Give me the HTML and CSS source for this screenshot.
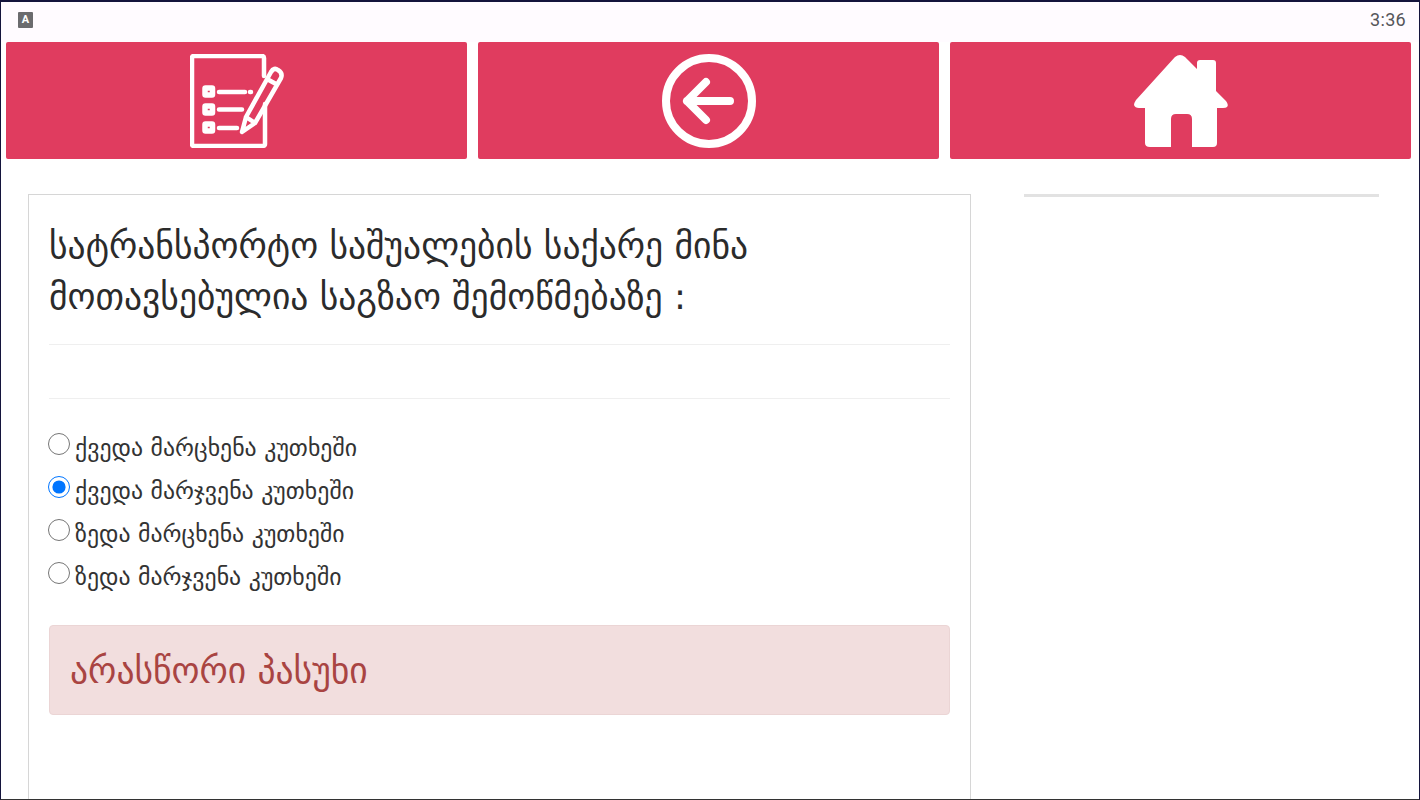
FILE: index.html
```html
<!DOCTYPE html>
<html lang="ka">
<head>
    <meta charset="UTF-8">
    <meta name="viewport" content="width=device-width, initial-scale=1.0">
    <title>საგზაო ნიშნები</title>
    <link rel="stylesheet" href="styles.css">
</head>
<body>
    <div class="status-bar">
        <span class="status-badge">A</span>
        <span class="status-time">3:36</span>
    </div>

    <nav class="nav-row">
        <a class="nav-button">
            <svg class="nav-icon" viewBox="0 0 94 94" width="94" height="94" fill="none" stroke="#fff" stroke-width="4.500" stroke-linecap="round" stroke-linejoin="round">
                <path d="M74 22V4Q74 2 72 2H4Q2 2 2 4V90Q2 92 4 92H72Q75 92 75 90V50"/>
                <rect x="15" y="34" width="7.500" height="7" rx="0.500" stroke-width="5.500"/>
                <rect x="15" y="52" width="7.500" height="7" rx="0.500" stroke-width="5.500"/>
                <rect x="15" y="70" width="7.500" height="7" rx="0.500" stroke-width="5.500"/>
                <path d="M29 38H55M60 38H61M29 55.500H52M29 74H47"/>
                <path d="M52 78L56 63L81 18Q84 13 88 16Q93 19 91 24L65 69ZM56 63L65 69M77 25L86 30"/>
            </svg>
        </a>
        <a class="nav-button">
            <svg class="nav-icon" viewBox="0 0 94 94" width="94" height="94" fill="none" stroke="#fff" stroke-linecap="round" stroke-linejoin="round">
                <circle cx="47" cy="47" r="43" stroke-width="8"/>
                <path d="M25 47H68M44 28L25 47L44 66" stroke-width="8"/>
            </svg>
        </a>
        <a class="nav-button">
            <svg class="nav-icon" viewBox="0 0 94 94" width="94" height="94" fill="#fff">
                <path d="M41 3Q46 -1 51 3L63 15V9Q63 6 66 6H79Q82 6 82 9V37L92 47Q95 51 93 53Q92 54 89 54H83V89Q83 93 79 93H58V65Q58 60 53 60H42Q37 60 37 65V93H16Q11 93 11 89V54H5Q1 54 0 51Q0 49 2 46Z"/>
            </svg>
        </a>
    </nav>

    <main class="page">
        <section class="question-card">
            <h2 class="question-title">სატრანსპორტო საშუალების საქარე მინა მოთავსებულია საგზაო შემოწმებაზე :</h2>
            <hr class="divider">
            <div class="image-slot"></div>
            <hr class="divider">

            <div class="answers">
                <label class="answer"><input type="radio" name="answer"><span>ქვედა მარცხენა კუთხეში</span></label>
                <label class="answer"><input type="radio" name="answer" checked><span>ქვედა მარჯვენა კუთხეში</span></label>
                <label class="answer"><input type="radio" name="answer"><span>ზედა მარცხენა კუთხეში</span></label>
                <label class="answer"><input type="radio" name="answer"><span>ზედა მარჯვენა კუთხეში</span></label>
            </div>

            <div class="alert-wrong">არასწორი პასუხი</div>
        </section>

        <aside class="sidebar">
            <hr class="sidebar-line">
        </aside>
    </main>
</body>
</html>
```

FILE: styles.css
```css
* {
    box-sizing: border-box;
}
body {
    margin: 0;
    height: 800px;
    overflow: hidden;
    background-color: #fff;
    color: #212529;
    font-family: "DejaVu Sans", "Noto Sans", sans-serif;
    border-top: 2px solid #14143c;
    border-left: 1px solid #14143c;
    border-right: 1px solid #14143c;
    border-bottom: 1px solid #333;
}

/* top status bar */
.status-bar {
    height: 40px;
    padding: 0 13px 5px 17px;
    background-color: #fffbff;
    display: flex;
    align-items: center;
    justify-content: space-between;
}
.status-badge {
    width: 15px;
    height: 16px;
    border-radius: 1px;
    background-color: #6b6b6e;
    color: #fff;
    font-family: "Roboto", sans-serif;
    font-size: 11px;
    font-weight: 700;
    line-height: 16px;
    text-align: center;
}
.status-time {
    color: #55555a;
    font-family: "Roboto", sans-serif;
    font-size: 18px;
    letter-spacing: 0.3px;
}

/* nav buttons */
.nav-row {
    display: flex;
    gap: 11px;
    padding: 0 8px 0 5px;
}
.nav-button {
    flex: 1;
    height: 117px;
    background-color: #e03c5f;
    border-radius: 2px;
    display: flex;
    align-items: center;
    justify-content: center;
    cursor: pointer;
}
.nav-icon {
    display: block;
}

/* main layout */
.page {
    display: flex;
    align-items: flex-start;
    padding: 35px 0 0 27px;
}
.question-card {
    width: 943px;
    height: 610px;
    flex-shrink: 0;
    padding: 25px 20px 0;
    background-color: #fff;
    border: 1px solid #d6d6d6;
    border-bottom: 0;
}
.question-title {
    margin: 0;
    font-size: 35.600px;
    font-weight: 400;
    line-height: 51px;
    color: #2b2b2b;
}
.divider {
    margin: 22px 0 0;
    border: 0;
    border-top: 1px solid #efefef;
}
.image-slot {
    height: 31px;
}

.answers {
    margin-top: 35px;
}
.answer {
    display: flex;
    align-items: flex-start;
    height: 43px;
    font-size: 23.800px;
    color: #333;
    cursor: pointer;
}
.answer input {
    width: 22px;
    height: 22px;
    margin: -1px 5px 0 -1px;
    flex-shrink: 0;
}
.answer span {
    padding-top: 1px;
    line-height: 26px;
}

.alert-wrong {
    margin-top: 19px;
    height: 90px;
    padding: 0 20px;
    display: flex;
    align-items: center;
    font-size: 35.600px;
    color: #a94442;
    background-color: #f2dede;
    border: 1px solid #ebd5d5;
    border-radius: 4px;
}

.sidebar {
    width: 355px;
    margin-left: 53px;
}
.sidebar-line {
    margin: 0;
    border: 0;
    border-top: 3px solid #e2e2e2;
}
```
